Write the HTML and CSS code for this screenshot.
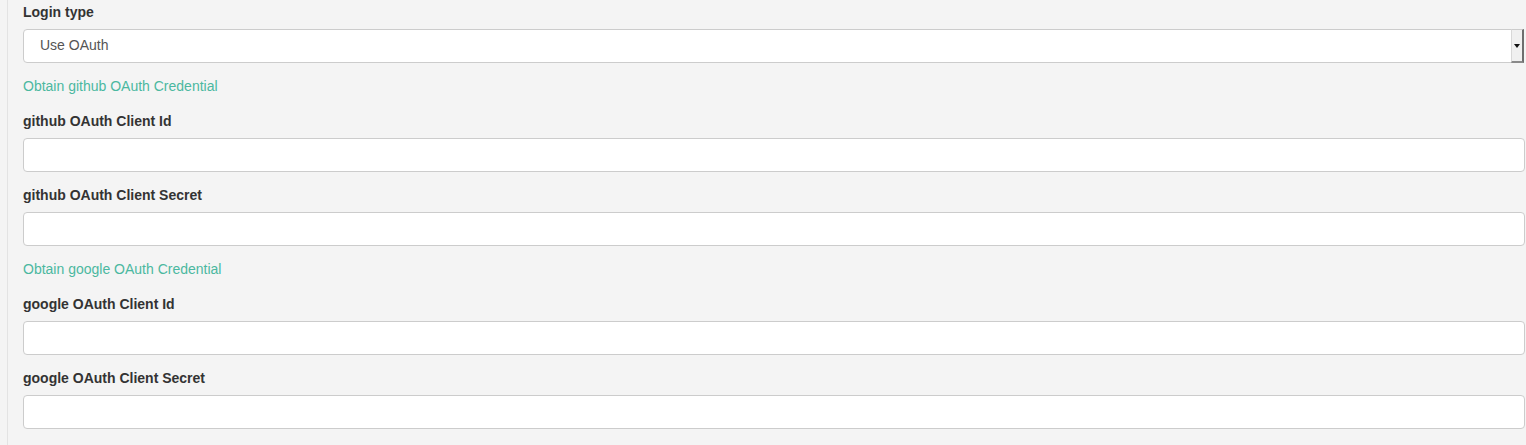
FILE: index.html
```html
<!DOCTYPE html>
<html>
<head>
<meta charset="utf-8">
<link rel="stylesheet" href="styles.css">
</head>
<body>
<div class="page">
  <form class="form">
    <div class="form-group">
      <label class="label">Login type</label>
      <div class="select-wrap">
        <div class="select">Use OAuth</div>
        <span class="select-btn"><span class="arrow"></span></span>
      </div>
    </div>
    <a class="link" href="#">Obtain github OAuth Credential</a>
    <div class="form-group">
      <label class="label">github OAuth Client Id</label>
      <input class="input" type="text">
    </div>
    <div class="form-group">
      <label class="label">github OAuth Client Secret</label>
      <input class="input" type="text">
    </div>
    <a class="link" href="#">Obtain google OAuth Credential</a>
    <div class="form-group">
      <label class="label">google OAuth Client Id</label>
      <input class="input" type="text">
    </div>
    <div class="form-group">
      <label class="label">google OAuth Client Secret</label>
      <input class="input" type="text">
    </div>
  </form>
</div>
</body>
</html>
```

FILE: styles.css
```css
* { box-sizing: border-box; }
html, body {
  margin: 0;
  padding: 0;
  background: #f4f4f4;
  font-family: "Liberation Sans", Arial, Helvetica, sans-serif;
  font-size: 14px;
  line-height: 20px;
  color: #333;
  overflow: hidden;
}
.page {
  margin-left: 7px;
  border-left: 1px solid #e3e3e3;
  padding: 4px 1px 0 15px;
  min-height: 445px;
}
.form {
  display: flex;
  flex-direction: column;
}
.form-group {
  display: flex;
  flex-direction: column;
  margin-bottom: 15px;
}
.label {
  display: block;
  font-weight: bold;
  margin-bottom: 5px;
  height: 20px;
  line-height: 17px;
}
.input, .select {
  display: block;
  width: 100%;
  height: 34px;
  background: #fff;
  border: 1px solid #ccc;
  border-radius: 4px;
  font-family: inherit;
  font-size: 14px;
  color: #555;
  padding: 6px 12px;
  margin: 0;
  outline: none;
}
.select-wrap {
  position: relative;
  margin-right: 1px;
}
.select {
  padding: 5px 12px 6px 16px;
  line-height: 20px;
}
.select-btn {
  position: absolute;
  right: 0;
  top: 0;
  width: 13px;
  height: 34px;
  background: #f0f0f0;
  border-left: 1px solid #d8d8d8;
  border-right: 2px solid #6e6e6e;
  border-bottom: 2px solid #8a8a8a;
  border-top: 1px solid #ccc;
  display: flex;
  align-items: center;
  justify-content: center;
}
.arrow {
  width: 0;
  height: 0;
  border-left: 3.5px solid transparent;
  border-right: 3.5px solid transparent;
  border-top: 4px solid #111;
  margin-top: 1px;
}
.link {
  display: block;
  color: #4bb8a0;
  text-decoration: none;
  margin-bottom: 15px;
  height: 20px;
  line-height: 17px;
}
```
